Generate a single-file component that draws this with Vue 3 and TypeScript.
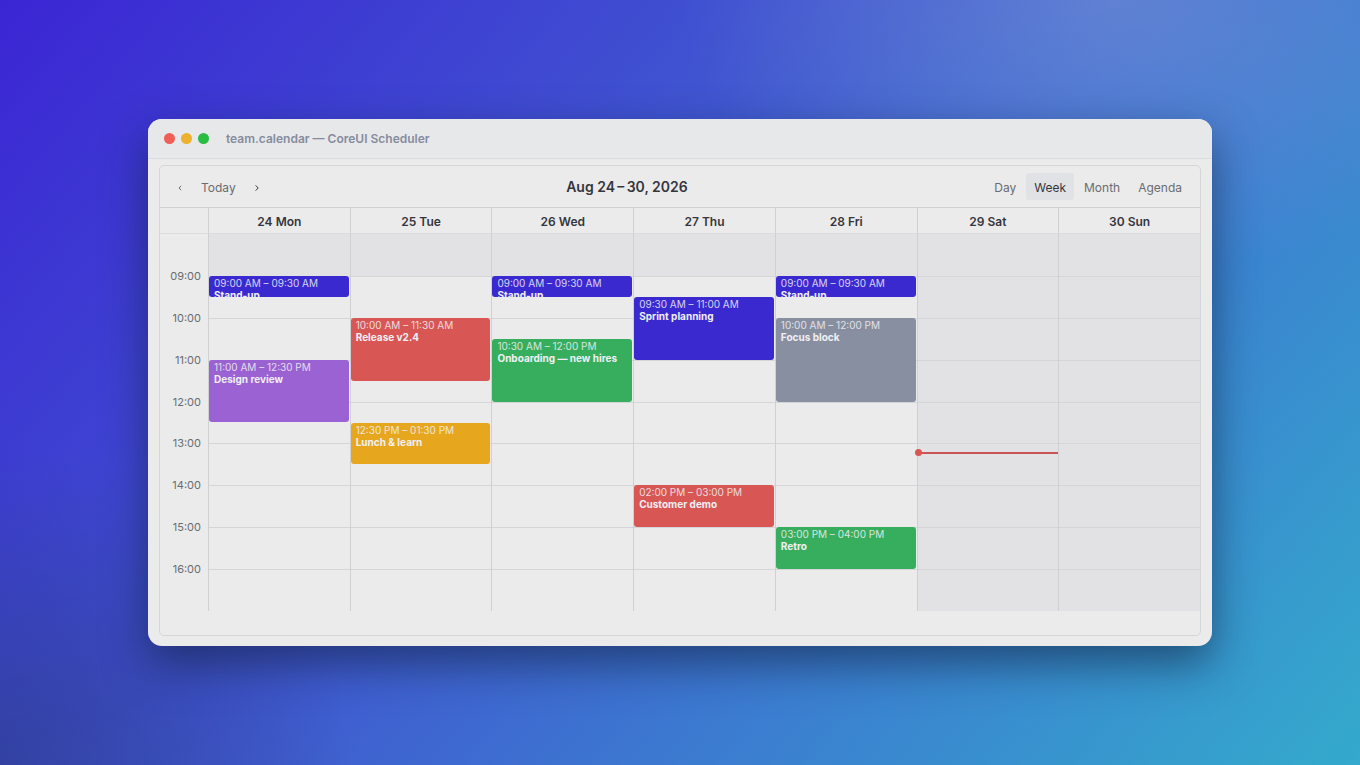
<script setup lang="ts">
import { ref } from 'vue'

interface CalendarEvent {
  title: string
  start: number
  end: number
  tone: string
}
interface Day {
  label: string
  off?: boolean
  now?: number
  events: CalendarEvent[]
}

const firstHour = 8
const lastHour = 17
const hours = Array.from({ length: lastHour - firstHour }, (_, i) => firstHour + i)
const views = ['Day', 'Week', 'Month', 'Agenda']
const activeView = ref('Week')

const days: Day[] = [
  {
    label: '24 Mon',
    events: [
      { title: 'Stand-up', start: 9, end: 9.5, tone: 'primary' },
      { title: 'Design review', start: 11, end: 12.5, tone: 'purple' },
    ],
  },
  {
    label: '25 Tue',
    events: [
      { title: 'Release v2.4', start: 10, end: 11.5, tone: 'danger' },
      { title: 'Lunch & learn', start: 12.5, end: 13.5, tone: 'warning' },
    ],
  },
  {
    label: '26 Wed',
    events: [
      { title: 'Stand-up', start: 9, end: 9.5, tone: 'primary' },
      { title: 'Onboarding — new hires', start: 10.5, end: 12, tone: 'success' },
    ],
  },
  {
    label: '27 Thu',
    events: [
      { title: 'Sprint planning', start: 9.5, end: 11, tone: 'primary' },
      { title: 'Customer demo', start: 14, end: 15, tone: 'danger' },
    ],
  },
  {
    label: '28 Fri',
    events: [
      { title: 'Stand-up', start: 9, end: 9.5, tone: 'primary' },
      { title: 'Focus block', start: 10, end: 12, tone: 'neutral' },
      { title: 'Retro', start: 15, end: 16, tone: 'success' },
    ],
  },
  { label: '29 Sat', off: true, now: 13.21, events: [] },
  { label: '30 Sun', off: true, events: [] },
]

const pad = (n: number) => String(n).padStart(2, '0')
const clock = (t: number) => {
  const h = Math.floor(t)
  return `${pad(h > 12 ? h - 12 : h)}:${pad((t - h) * 60)} ${h < 12 ? 'AM' : 'PM'}`
}
const offset = (t: number) => `${((t - firstHour) / hours.length) * 100}%`
const span = (e: CalendarEvent) => ({
  top: offset(e.start),
  height: `${((e.end - e.start) / hours.length) * 100}%`,
})
</script>

<template>
  <main class="stage">
    <section class="window">
      <header class="titlebar">
        <span class="dot red"></span>
        <span class="dot amber"></span>
        <span class="dot green"></span>
        <span class="name">team.calendar — CoreUI Scheduler</span>
      </header>
      <div class="frame">
        <div class="scheduler">
          <div class="toolbar">
            <nav class="pager">
              <button class="arrow" type="button" aria-label="Previous week">
                <svg viewBox="0 0 4 6"><path d="M3.1 0.8 L1.1 3 L3.1 5.2" /></svg>
              </button>
              <button type="button">Today</button>
              <button class="arrow next" type="button" aria-label="Next week">
                <svg viewBox="0 0 4 6"><path d="M0.7 0.4 L3.2 3 L0.7 5.6" /></svg>
              </button>
            </nav>
            <h1>Aug 24&#8201;–&#8201;30, 2026</h1>
            <div class="views">
              <button
                v-for="v in views"
                :key="v"
                type="button"
                :class="{ active: v === activeView }"
                @click="activeView = v"
              >{{ v }}</button>
            </div>
          </div>
          <div class="heads">
            <div class="corner"></div>
            <div v-for="d in days" :key="d.label" class="head">{{ d.label }}</div>
          </div>
          <div class="body">
            <div class="gutter">
              <div v-for="h in hours" :key="h" class="slot">
                <span v-if="h > firstHour" class="hour">{{ pad(h) }}:00</span>
              </div>
            </div>
            <div v-for="d in days" :key="d.label" class="day" :class="{ off: d.off }">
              <div v-for="h in hours" :key="h" class="cell"></div>
              <article
                v-for="e in d.events"
                :key="e.start"
                class="event"
                :class="e.tone"
                :style="span(e)"
              >
                <time>{{ clock(e.start) }} – {{ clock(e.end) }}</time>
                <strong>{{ e.title }}</strong>
              </article>
              <div v-if="d.now" class="now" :style="{ top: offset(d.now) }"></div>
            </div>
          </div>
        </div>
      </div>
    </section>
  </main>
</template>

<style>
body {
  margin: 0;
}
</style>

<style scoped>
.stage {
  box-sizing: border-box;
  min-height: 100vh;
  padding: 24px 148px;
  display: flex;
  align-items: center;
  font-family: Inter, "Liberation Sans", sans-serif;
  color: #35363d;
  background:
    radial-gradient(ellipse 32% 36% at 82% 0%, rgba(130, 150, 215, 0.5), transparent),
    radial-gradient(ellipse 26% 42% at 0% 100%, rgba(42, 58, 130, 0.6), transparent),
    linear-gradient(130deg, #3b26d4 0%, #4058d0 42%, #3b80d0 70%, #34aacc 100%);
}
.window {
  flex: 1;
  min-width: 0;
  overflow: hidden;
  border-radius: 14px;
  background: #ebebeb;
  box-shadow: 0 18px 44px rgba(15, 30, 60, 0.58);
}
.titlebar {
  height: 39px;
  padding: 0 16px;
  display: flex;
  align-items: center;
  gap: 6px;
  border-bottom: 1px solid #dadcdf;
  background: #e7e8ea;
}
.dot {
  width: 11px;
  height: 11px;
  border-radius: 50%;
}
.red { background: #ee5f57; }
.amber { background: #edb02f; }
.green { background: #2bbd42; }
.name {
  margin-left: 11px;
  font-size: 12px;
  font-weight: 600;
  color: #868c9e;
}
.frame {
  padding: 6px 11px 10px;
}
.scheduler {
  padding-bottom: 24px;
  border: 1px solid #d4d6d8;
  border-radius: 5px;
}
.toolbar {
  height: 41px;
  padding: 0 10px 0 9px;
  display: flex;
  justify-content: space-between;
  align-items: center;
  border-bottom: 1px solid #ced0d2;
}
.toolbar button {
  height: 27px;
  padding: 2px 8px 0;
  border: 0;
  border-radius: 3px;
  background: transparent;
  font: 400 12px/18px Inter, "Liberation Sans", sans-serif;
  color: #6a6b70;
  cursor: pointer;
}
.toolbar .active {
  background: #e0e2e6;
  color: #35363d;
}
.pager,
.views {
  display: flex;
  align-items: center;
  gap: 2px;
}
.toolbar .arrow {
  width: 22px;
  display: flex;
  align-items: center;
  justify-content: center;
}
.arrow svg {
  flex: none;
  width: 4px;
  height: 6px;
  fill: none;
  stroke: currentColor;
  stroke-width: 1;
}
.toolbar .next {
  color: #35363d;
}
h1 {
  margin: 0;
  font-size: 14px;
  line-height: 20px;
  font-weight: 600;
}
.heads,
.body {
  display: grid;
  grid-template-columns: 48px repeat(7, minmax(0, 1fr));
}
.head,
.corner {
  height: 25px;
  border-bottom: 1px solid #dadcde;
}
.head {
  border-left: 1px solid #ced0d2;
  font-size: 12px;
  line-height: 27px;
  font-weight: 600;
  text-align: center;
}
.body {
  height: 377px;
}
.gutter,
.day {
  display: grid;
  grid-template-rows: repeat(9, minmax(0, 1fr));
}
.day {
  position: relative;
  border-left: 1px solid #ced0d2;
}
.slot {
  padding-right: 7px;
  text-align: right;
}
.hour {
  display: block;
  margin-top: -8px;
  font-size: 11px;
  line-height: 17px;
  color: #6a6b70;
}
.cell + .cell {
  border-top: 1px solid #d3d5d6;
}
.cell:first-child,
.off .cell {
  background: #e2e2e4;
}
.event {
  position: absolute;
  left: 0;
  right: 1px;
  box-sizing: border-box;
  padding: 2px 5px;
  overflow: hidden;
  border-radius: 3px;
  color: #f0f0f4;
}
.event time,
.event strong {
  display: block;
  white-space: nowrap;
}
.event time {
  font-size: 10px;
  line-height: 11px;
  opacity: 0.85;
}
.event strong {
  font-size: 10px;
  line-height: 12px;
  font-weight: 700;
}
.primary { background: #3b29d0; }
.purple { background: #9a62d2; }
.danger { background: #d85755; }
.warning { background: #e6a71f; }
.success { background: #37ae5e; }
.neutral { background: #888fa0; }
.now {
  position: absolute;
  left: 0;
  right: 0;
  height: 2px;
  background: #cb5355;
}
.now::before {
  content: "";
  position: absolute;
  left: -3px;
  top: -3px;
  width: 7px;
  height: 7px;
  border-radius: 50%;
  background: #d85755;
}
</style>
